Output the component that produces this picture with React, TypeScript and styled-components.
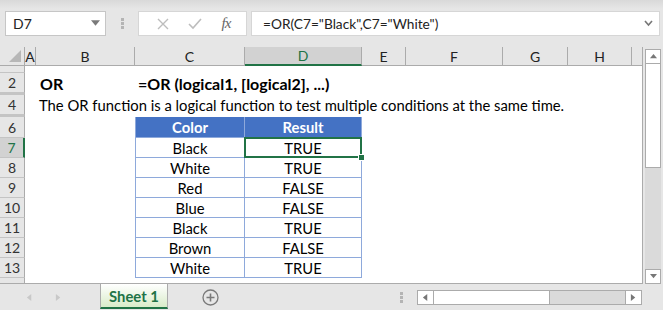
import React from 'react';
import styled, { createGlobalStyle } from 'styled-components';

const GlobalStyle = createGlobalStyle`
  html, body { margin: 0; padding: 0; background: #e6e6e6; }
  * { box-sizing: border-box; }
`;

const COLS = '25px 11px 99px 110px 117px 44px 97px 65px 64px 11px';
const CELL_FONT = `Lato, "Liberation Sans", sans-serif`;
const GREEN = '#217346';

const Window = styled.div`
  width: 663px;
  height: 310px;
  display: flex;
  flex-direction: column;
  background: #e6e6e6;
  font-family: ${CELL_FONT};
  overflow: hidden;
`;

const FormulaBar = styled.div`
  height: 47px;
  flex-shrink: 0;
  display: flex;
  align-items: flex-start;
  padding: 11px 3px 0 5px;
  background: linear-gradient(#d9d9d9 0px, #e6e6e6 9px);
`;

const NameBox = styled.div`
  width: 101px;
  height: 25px;
  background: #fff;
  border: 1px solid #c6c6c6;
  display: flex;
  align-items: center;
  justify-content: space-between;
  padding: 0 5px 0 7px;
  font-size: 14px;
  color: #222;
`;

const Grip = styled.div`
  width: 32px;
  height: 25px;
  display: flex;
  align-items: center;
  justify-content: center;
`;

const FxButtons = styled.div`
  width: 109px;
  height: 25px;
  background: #fff;
  border: 1px solid #d6d6d6;
  display: flex;
  align-items: center;
  justify-content: space-around;
  padding: 0 6px 0 8px;
`;

const FxLabel = styled.span`
  font-family: "Liberation Serif", serif;
  font-style: italic;
  font-size: 15px;
  color: #666;
  letter-spacing: -1px;
`;

const FormulaInput = styled.div`
  flex: 1;
  height: 25px;
  margin-left: 4px;
  background: #fff;
  border: 1px solid #d6d6d6;
  display: flex;
  align-items: center;
  justify-content: space-between;
  padding: 0 6px 0 11px;
  font-size: 13.7px;
  color: #222;
`;

const SheetArea = styled.div`
  display: flex;
  height: 237px;
  flex-shrink: 0;
`;

const Grid = styled.div`
  width: 643px;
  background: #fff;
  border-right: 1px solid #ababab;
  border-bottom: 1px solid #ababab;
  overflow: hidden;
`;

const Row = styled.div<{ h: number }>`
  display: grid;
  grid-template-columns: ${COLS};
  height: ${({ h }) => h}px;
`;

const Corner = styled.div`
  background: #e6e6e6;
  border-right: 1px solid #ababab;
  border-bottom: 1px solid #ababab;
  display: flex;
  align-items: flex-end;
  justify-content: flex-end;
  padding: 0 3px 3px 0;
`;

const ColHead = styled.div<{ active?: boolean }>`
  background: ${({ active }) => (active ? '#d2d2d2' : '#e6e6e6')};
  color: ${({ active }) => (active ? GREEN : '#222')};
  border-right: 1px solid #ababab;
  border-bottom: ${({ active }) => (active ? `2px solid ${GREEN}` : '1px solid #ababab')};
  font-size: 14px;
  display: flex;
  align-items: center;
  justify-content: center;
`;

const RowHead = styled.div<{ active?: boolean; hidden?: boolean }>`
  background: ${({ active }) => (active ? '#d2d2d2' : '#e6e6e6')};
  color: ${({ active }) => (active ? GREEN : '#333')};
  border-right: ${({ active }) => (active ? `2px solid ${GREEN}` : '1px solid #ababab')};
  border-bottom: 1px solid #c4c4c4;
  border-top: ${({ hidden }) => (hidden ? '1px solid #c4c4c4' : 'none')};
  font-size: 14px;
  display: flex;
  align-items: center;
  justify-content: center;
  overflow: hidden;
`;

const TextCell = styled.div<{ col: number; span: number; bold?: boolean; pad?: number }>`
  grid-column: ${({ col, span }) => `${col} / span ${span}`};
  font-size: ${({ bold }) => (bold ? 16 : 14.8)}px;
  font-weight: ${({ bold }) => (bold ? 700 : 400)};
  color: #000;
  white-space: nowrap;
  display: flex;
  align-items: center;
  padding-left: ${({ pad }) => pad ?? 3}px;
`;

const TableCell = styled.div<{ col: number; head?: boolean; first?: boolean }>`
  grid-column: ${({ col }) => col};
  position: relative;
  background: ${({ head }) => (head ? '#4472c4' : '#fff')};
  color: ${({ head }) => (head ? '#fff' : '#000')};
  font-weight: ${({ head }) => (head ? 700 : 400)};
  font-size: 14.8px;
  border-right: 1px solid #8ea9db;
  border-bottom: 1px solid #8ea9db;
  border-left: ${({ first }) => (first ? '1px solid #8ea9db' : 'none')};
  display: flex;
  align-items: center;
  justify-content: center;
`;

const Selection = styled.div`
  position: absolute;
  z-index: 2;
  left: -1px;
  top: -1px;
  right: -1px;
  bottom: -1px;
  border: 2px solid ${GREEN};
`;

const FillHandle = styled.div`
  position: absolute;
  right: -5px;
  bottom: -5px;
  width: 7px;
  height: 7px;
  background: ${GREEN};
  border: 1px solid #fff;
`;

const VScroll = styled.div`
  width: 16px;
  margin-left: 2px;
  padding-top: 2px;
  display: flex;
  flex-direction: column;
`;

const ArrowBox = styled.div`
  width: 16px;
  height: 15px;
  background: #fff;
  border: 1px solid #ababab;
  display: flex;
  align-items: center;
  justify-content: center;
  flex-shrink: 0;
`;

const VThumb = styled.div`
  height: 104px;
  background: #fff;
  border: 1px solid #ababab;
  border-top: none;
`;

const VTrack = styled.div`
  flex: 1;
  background: #dadada;
`;

const BottomBar = styled.div`
  flex: 1;
  display: flex;
  align-items: flex-start;
`;

const NavArrows = styled.div`
  width: 100px;
  height: 26px;
  display: flex;
  align-items: center;
  padding-left: 26px;
  gap: 22px;
`;

const SheetTab = styled.div`
  width: 68px;
  height: 25px;
  background: linear-gradient(#ffffff, #d9ecc9);
  border: 1px solid #ababab;
  border-top: none;
  border-bottom: 2px solid ${GREEN};
  color: ${GREEN};
  font-weight: 700;
  font-size: 14.8px;
  display: flex;
  align-items: center;
  justify-content: center;
`;

const AddSheet = styled.div`
  width: 84px;
  height: 26px;
  display: flex;
  align-items: center;
  justify-content: center;
`;

const HScrollWrap = styled.div`
  flex: 1;
  height: 26px;
  display: flex;
  align-items: center;
  padding-left: 148px;
  padding-right: 21px;
`;

const HGrip = styled.div`
  width: 17px;
  display: flex;
  justify-content: flex-start;
`;

const HScroll = styled.div`
  flex: 1;
  height: 15px;
  display: flex;
  border: 1px solid #ababab;
  background: #dadada;
`;

const HArrow = styled.div`
  width: 15px;
  background: #fff;
  display: flex;
  align-items: center;
  justify-content: center;
`;

const HThumb = styled.div`
  width: 117px;
  background: #fff;
  border-left: 1px solid #ababab;
  border-right: 1px solid #ababab;
`;

const HTrack = styled.div`
  flex: 1;
  border-right: 1px solid #ababab;
`;

const Tri = ({ dir, color = '#777', size = 7 }: { dir: 'up' | 'down' | 'left' | 'right'; color?: string; size?: number }) => {
  const pts = {
    up: '0,6 8,6 4,1',
    down: '0,1 8,1 4,6',
    left: '6,0 6,8 1,4',
    right: '1,0 1,8 6,4',
  }[dir];
  return (
    <svg width={size} height={size} viewBox="0 0 8 8">
      <polygon points={pts} fill={color} />
    </svg>
  );
};

const Dots = () => (
  <svg width="3" height="11" viewBox="0 0 3 11">
    {[0, 4, 8].map((y) => (
      <rect key={y} x="0" y={y} width="3" height="3" fill="#b4b4b4" />
    ))}
  </svg>
);

const rows = [
  { n: 7, color: 'Black', result: 'TRUE' },
  { n: 8, color: 'White', result: 'TRUE' },
  { n: 9, color: 'Red', result: 'FALSE' },
  { n: 10, color: 'Blue', result: 'FALSE' },
  { n: 11, color: 'Black', result: 'TRUE' },
  { n: 12, color: 'Brown', result: 'FALSE' },
  { n: 13, color: 'White', result: 'TRUE' },
];

const App: React.FC = () => {
  return (
    <Window>
      <GlobalStyle />
      <FormulaBar>
        <NameBox>
          <span>D7</span>
          <Tri dir="down" color="#7a7a7a" size={9} />
        </NameBox>
        <Grip>
          <Dots />
        </Grip>
        <FxButtons>
          <svg width="12" height="12" viewBox="0 0 12 12">
            <path d="M1 1 L11 11 M11 1 L1 11" stroke="#bdbdbd" strokeWidth="1.4" />
          </svg>
          <svg width="14" height="12" viewBox="0 0 14 12">
            <path d="M1 6 L5 10 L13 1" stroke="#bdbdbd" strokeWidth="1.6" fill="none" />
          </svg>
          <FxLabel>fx</FxLabel>
        </FxButtons>
        <FormulaInput>
          <span>=OR(C7="Black",C7="White")</span>
          <svg width="9" height="7" viewBox="0 0 9 7">
            <path d="M1 1 L4.5 5 L8 1" stroke="#777" strokeWidth="1.6" fill="none" />
          </svg>
        </FormulaInput>
      </FormulaBar>

      <SheetArea>
        <Grid>
          <Row h={19}>
            <Corner>
              <svg width="12" height="12" viewBox="0 0 12 12">
                <polygon points="12,0 12,12 0,12" fill="#b7b7b7" />
              </svg>
            </Corner>
            {['A', 'B', 'C', 'D', 'E', 'F', 'G', 'H', ''].map((c) => (
              <ColHead key={c || 'I'} active={c === 'D'}>
                {c}
              </ColHead>
            ))}
          </Row>
          <Row h={7}>
            <RowHead />
          </Row>
          <Row h={20}>
            <RowHead>2</RowHead>
            <TextCell col={3} span={1} bold pad={4}>OR</TextCell>
            <TextCell col={4} span={6} bold pad={3}>=OR (logical1, [logical2], ...)</TextCell>
          </Row>
          <Row h={2}>
            <RowHead hidden />
          </Row>
          <Row h={20}>
            <RowHead>4</RowHead>
            <TextCell col={3} span={8} pad={3}>
              The OR function is a logical function to test multiple conditions at the same time.
            </TextCell>
          </Row>
          <Row h={2}>
            <RowHead hidden />
          </Row>
          <Row h={21}>
            <RowHead>6</RowHead>
            <TableCell col={4} head first>Color</TableCell>
            <TableCell col={5} head>Result</TableCell>
          </Row>
          {rows.map((r) => (
            <Row h={20} key={r.n}>
              <RowHead active={r.n === 7}>{r.n}</RowHead>
              <TableCell col={4} first>{r.color}</TableCell>
              <TableCell col={5}>
                {r.result}
                {r.n === 7 && (
                  <Selection>
                    <FillHandle />
                  </Selection>
                )}
              </TableCell>
            </Row>
          ))}
          <Row h={6}>
            <RowHead />
          </Row>
        </Grid>
        <VScroll>
          <ArrowBox>
            <Tri dir="up" />
          </ArrowBox>
          <VThumb />
          <VTrack />
          <ArrowBox>
            <Tri dir="down" />
          </ArrowBox>
        </VScroll>
      </SheetArea>

      <BottomBar>
        <NavArrows>
          <Tri dir="left" color="#c8c8c8" />
          <Tri dir="right" color="#c8c8c8" />
        </NavArrows>
        <SheetTab>Sheet 1</SheetTab>
        <AddSheet>
          <svg width="17" height="17" viewBox="0 0 17 17">
            <circle cx="8.5" cy="8.5" r="7.5" fill="none" stroke="#7a7a7a" strokeWidth="1.3" />
            <path d="M8.5 4.5 V12.5 M4.5 8.5 H12.5" stroke="#7a7a7a" strokeWidth="1.6" />
          </svg>
        </AddSheet>
        <HScrollWrap>
          <HGrip>
            <Dots />
          </HGrip>
          <HScroll>
            <HArrow>
              <Tri dir="left" />
            </HArrow>
            <HThumb />
            <HTrack />
            <HArrow>
              <Tri dir="right" />
            </HArrow>
          </HScroll>
        </HScrollWrap>
      </BottomBar>
    </Window>
  );
};

export default App;
